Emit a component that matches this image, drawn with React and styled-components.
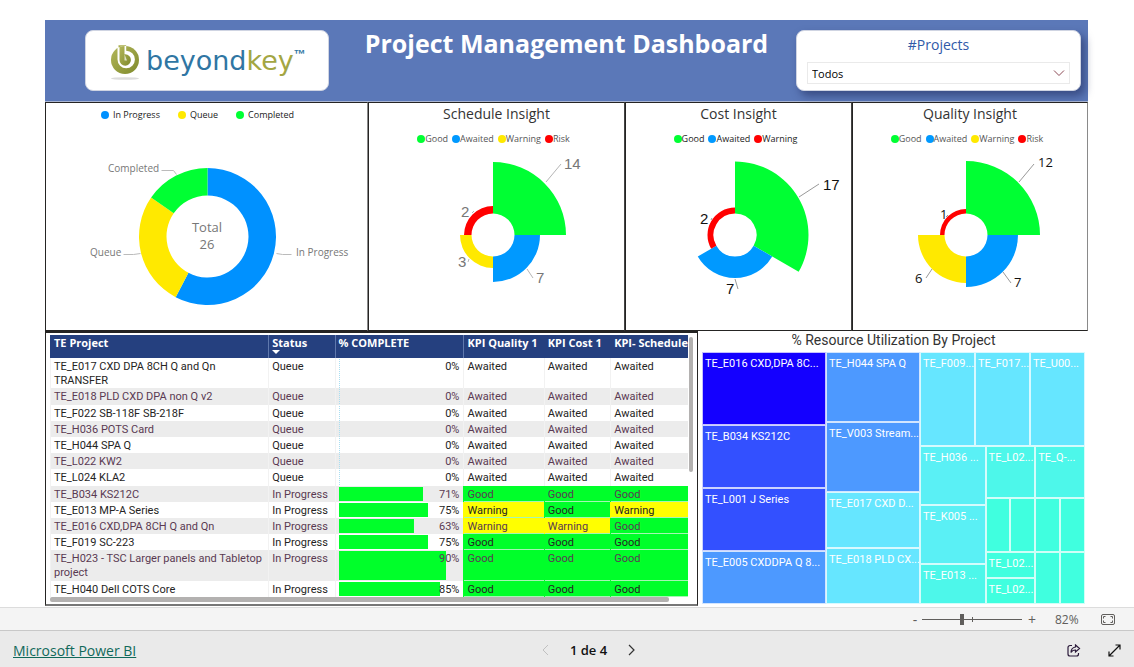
import React, { useState } from "react";
import styled, { createGlobalStyle } from "styled-components";

const GREEN = "#00ff33";
const BLUE = "#0091ff";
const SKY = "#0099ff";
const YELLOW = "#ffe900";
const RED = "#ff0000";
const UI = '"Open Sans", "Noto Sans", sans-serif';
const COMPACT = "Roboto, sans-serif";

const GlobalStyle = createGlobalStyle`
  * { box-sizing: border-box; }
  body { margin: 0; background: #fff; font-family: ${UI}; color: #252423; }
  button, select, input { font-family: inherit; }
`;

const Page = styled.div`
  display: flex;
  flex-direction: column;
  min-height: 100vh;
`;

const Report = styled.main`
  flex: 1;
  padding: 20px 46px 0 45px;
`;

/* ---------- header ---------- */

const Header = styled.header`
  display: flex;
  align-items: flex-start;
  height: 82px;
  padding: 10px 7px 10px 40px;
  background: #5b78b8;
  border-bottom: 1px solid #a9b5d2;
`;

const LogoCard = styled.div`
  display: flex;
  align-items: center;
  width: 244px;
  height: 61px;
  padding-left: 24px;
  gap: 6px;
  background: #fff;
  border: 1px solid #cfd4e2;
  border-radius: 8px;
`;

const Wordmark = styled.span`
  display: flex;
  align-items: flex-start;
  font-family: "DejaVu Sans", sans-serif;
  font-size: 27px;
  line-height: 30px;
  color: #2f76a3;
`;

const KeyPart = styled.span`
  color: #a3a643;
`;

const Trademark = styled.span`
  font-family: "Liberation Sans", sans-serif;
  font-size: 12px;
  font-weight: 700;
  line-height: 16px;
`;

const Title = styled.h1`
  flex: 1;
  margin: 0;
  padding-left: 8px;
  text-align: center;
  color: #fff;
  font-size: 25px;
  font-weight: 700;
  line-height: 26px;
  white-space: nowrap;
`;

const SlicerCard = styled.div`
  display: flex;
  flex-direction: column;
  width: 285px;
  height: 61px;
  padding: 2px 10px;
  gap: 6px;
  background: #fff;
  border: 1px solid #cfd4e2;
  border-radius: 8px;
  box-shadow: 4px 5px 8px rgba(30, 40, 90, 0.55);
`;

const SlicerLabel = styled.label`
  text-align: center;
  color: #2f5aa8;
  font-size: 14px;
  line-height: 23px;
`;

const SelectBox = styled.div`
  display: grid;
  align-items: center;
  border: 1px solid #eaeaea;
  > * { grid-area: 1 / 1; }
  > svg { justify-self: end; margin-right: 4px; pointer-events: none; }
`;

const Select = styled.select`
  appearance: none;
  width: 100%;
  height: 20px;
  padding: 0 4px;
  border: 0;
  background: transparent;
  color: #000;
  font-size: 11px;
`;

/* ---------- chart panels ---------- */

const ChartRow = styled.section`
  display: grid;
  grid-template-columns: 323fr 257fr 227fr 236fr;
`;

const Panel = styled.article`
  display: flex;
  flex-direction: column;
  align-items: center;
  min-width: 0;
  height: 229px;
  overflow: hidden;
  border: 1px solid #252423;
  border-right-color: ${(p) => (p.$softEdge ? "#8a8a8a" : "#444")};
`;

const PanelTitle = styled.h2`
  margin: 0;
  font-size: 14px;
  font-weight: 400;
  line-height: 22px;
  color: #333;
`;

const Legend = styled.ul`
  display: flex;
  margin: 0;
  padding: ${(p) => (p.$wide ? "0 18px 0 0" : "2px 6px 0 0")};
  gap: ${(p) => (p.$wide ? 18 : 4)}px;
  height: ${(p) => (p.$wide ? 24 : 26)}px;
  align-items: center;
  list-style: none;
  font-size: 9px;
  line-height: 12px;
  color: ${(p) => p.$color || "#555"};
`;

const LegendItem = styled.li`
  display: flex;
  align-items: center;
  gap: ${(p) => (p.$wide ? 4 : 0)}px;
  white-space: nowrap;
  &::before {
    content: "";
    width: 8px;
    height: 8px;
    border-radius: 50%;
    background: ${(p) => p.$dot};
  }
`;

const Drawing = styled.svg`
  display: block;
  flex: none;
  max-width: 100%;
`;

const point = (cx, cy, r, deg) => {
  const a = ((deg - 90) * Math.PI) / 180;
  return `${(cx + r * Math.cos(a)).toFixed(2)} ${(cy + r * Math.sin(a)).toFixed(2)}`;
};

function Sector({ cx, cy, inner, outer, from, to, fill }) {
  const big = to - from > 180 ? 1 : 0;
  return (
    <path
      fill={fill}
      d={`M${point(cx, cy, outer, from)} A${outer} ${outer} 0 ${big} 1 ${point(cx, cy, outer, to)} L${point(cx, cy, inner, to)} A${inner} ${inner} 0 ${big} 0 ${point(cx, cy, inner, from)} Z`}
    />
  );
}

function StatusDonut() {
  const c = { cx: 161.5, cy: 109.5, inner: 41, outer: 68.5 };
  return (
    <Drawing width="321" height="202" viewBox="0 0 321 202" role="img" aria-label="Projects by status">
      <Sector {...c} from={0} to={207.7} fill={BLUE} />
      <Sector {...c} from={207.7} to={304.6} fill={YELLOW} />
      <Sector {...c} from={304.6} to={360} fill={GREEN} />
      <g fill="none" stroke="#bbb">
        <path d="M115.500 43.500h12l3 4" />
        <path d="M77.500 127.500h10l7-1" />
        <path d="M230.500 126.500l6 1h9" />
      </g>
      <g fontFamily={UI} fontSize="10" fill="#777">
        <text x="62" y="45">Completed</text>
        <text x="44" y="129">Queue</text>
        <text x="250" y="129">In Progress</text>
      </g>
      <g fontFamily={UI} fontSize="13" fill="#777" textAnchor="middle">
        <text x="161" y="105">Total</text>
        <text x="161" y="122">26</text>
      </g>
    </Drawing>
  );
}

function RadialChart({ name, slices, leaders, labels, leaderColor, color, font, size }) {
  const step = 360 / slices.length;
  return (
    <Drawing width="220" height="179" viewBox="0 0 220 179" role="img" aria-label={name}>
      {slices.map((s, i) => (
        <Sector key={i} cx={106} cy={84} inner={21.5} outer={s.r} from={i * step} to={(i + 1) * step} fill={s.fill} />
      ))}
      <path d={leaders} fill="none" stroke={leaderColor} />
      <g fontFamily={font} fontSize={size} fill={color}>
        {labels.map(([x, y, t], i) => (
          <text key={i} x={x} y={y}>{t}</text>
        ))}
      </g>
    </Drawing>
  );
}

const ARIAL = '"Liberation Sans", sans-serif';

const insights = [
  {
    name: "Schedule Insight",
    legend: [["Good", GREEN], ["Awaited", SKY], ["Warning", YELLOW], ["Risk", RED]],
    legendColor: "#555",
    slices: [{ r: 73, fill: GREEN }, { r: 47, fill: SKY }, { r: 33, fill: YELLOW }, { r: 29, fill: RED }],
    leaders: "M159 31L174 13M140 118L146 127M82 108L81 111M85 62L87 60",
    labels: [[177, 18, "14"], [149, 132, "7"], [71, 116, "3"], [74, 66, "2"]],
    leaderColor: "#b5b5b5",
    color: "#777",
    font: ARIAL,
    size: 15,
  },
  {
    name: "Cost Insight",
    legend: [["Good", GREEN], ["Awaited", SKY], ["Warning", RED]],
    legendColor: "#222",
    slices: [{ r: 73.5, fill: GREEN }, { r: 43, fill: SKY }, { r: 27.5, fill: RED }],
    leaders: "M170 46L190 33M106 128L109 138M82 69L83 67",
    labels: [[194, 39, "17"], [97, 143, "7"], [71, 73, "2"]],
    leaderColor: "#999",
    color: "#111",
    font: ARIAL,
    size: 15,
  },
  {
    name: "Quality Insight",
    legend: [["Good", GREEN], ["Awaited", SKY], ["Warning", YELLOW], ["Risk", RED]],
    legendColor: "#555",
    slices: [{ r: 74, fill: GREEN }, { r: 52, fill: SKY }, { r: 48, fill: YELLOW }, { r: 26, fill: RED }],
    leaders: "M159 31L174 13M143 121L151 132M72 118L66 127M86 66L88 64",
    labels: [[178, 16, "12"], [154, 136, "7"], [55, 132, "6"], [80, 68, "1"]],
    leaderColor: "#999",
    color: "#111",
    font: UI,
    size: 13,
  },
];

/* ---------- table ---------- */

const BottomRow = styled.section`
  display: grid;
  grid-template-columns: minmax(0, 653fr) minmax(0, 390fr);
`;

const TablePanel = styled.article`
  display: grid;
  grid-template-columns: minmax(0, 1fr) 4px;
  grid-template-rows: auto 5px;
  column-gap: 1px;
  padding: 2px 4px 2px 4px;
  border: 1px solid #252423;
  border-top-width: 2px;
  border-bottom: 2px solid #777;
`;

const TableClip = styled.div`
  overflow: hidden;
`;

const Table = styled.table`
  width: 100%;
  height: 262px;
  table-layout: fixed;
  border-collapse: separate;
  border-spacing: 0;
  font-size: 11px;
  line-height: 14px;
`;

const Th = styled.th`
  width: ${(p) => p.$w};
  height: 23px;
  padding: 1px 0 0 3px;
  background: #25407f;
  border-left: 1px solid ${(p) => (p.$divided ? "#5f78ad" : "#25407f")};
  color: #fff;
  font-weight: 700;
  line-height: 14px;
  text-align: left;
  vertical-align: top;
  white-space: nowrap;
`;

const SortArrow = styled.span`
  display: block;
  width: 0;
  border: 4px solid transparent;
  border-top-color: #fff;
  border-bottom: 0;
`;

const Tr = styled.tr`
  background: ${(p) => (p.$band ? "#ececec" : "#fff")};
  color: ${(p) => (p.$band ? "#5a3a52" : "#252423")};
`;

const Td = styled.td`
  padding: ${(p) => (p.$kpi ? "2px 0 0 3px" : "2px 0 0 3px")};
  border-left: 1px solid ${(p) => (p.$kpi ? "transparent" : "#f2f2f2")};
  background: ${(p) => p.$kpi || "transparent"};
  box-shadow: ${(p) => (p.$kpi ? "inset 0 -1px #a6f5b4" : "none")};
  vertical-align: top;
  font-family: ${COMPACT};
  white-space: ${(p) => (p.$nowrap ? "nowrap" : "normal")};
`;

const BarTd = styled(Td)`
  padding-right: 4px;
  text-align: right;
  background-image: ${(p) =>
    p.$bar
      ? "linear-gradient(#00ff2a, #00ff2a)"
      : "repeating-linear-gradient(#a8def2 0 1px, transparent 1px 2px)"};
  background-repeat: no-repeat;
  background-position: 3px 1px;
`;

const VThumb = styled.div`
  height: 135px;
  margin-top: 2px;
  border-radius: 2px;
  background: #b3b1b0;
`;

const HThumb = styled.div`
  width: 97%;
  height: 5px;
  border-radius: 2px;
  background: #b3b1b0;
`;

const rows = [
  ["TE_E017 CXD DPA 8CH Q and Qn TRANSFER", "Queue", 0, "A", "A", "A"],
  ["TE_E018 PLD CXD DPA non Q v2", "Queue", 0, "A", "A", "A"],
  ["TE_F022 SB-118F SB-218F", "Queue", 0, "A", "A", "A"],
  ["TE_H036 POTS Card", "Queue", 0, "A", "A", "A"],
  ["TE_H044 SPA Q", "Queue", 0, "A", "A", "A"],
  ["TE_L022 KW2", "Queue", 0, "A", "A", "A"],
  ["TE_L024 KLA2", "Queue", 0, "A", "A", "A"],
  ["TE_B034 KS212C", "In Progress", 71, "G", "G", "G"],
  ["TE_E013 MP-A Series", "In Progress", 75, "W", "G", "W"],
  ["TE_E016 CXD,DPA 8CH Q and Qn", "In Progress", 63, "W", "W", "G"],
  ["TE_F019 SC-223", "In Progress", 75, "G", "G", "G"],
  ["TE_H023 - TSC Larger panels and Tabletop project", "In Progress", 90, "G", "G", "G"],
  ["TE_H040 Dell COTS Core", "In Progress", 85, "G", "G", "G"],
];

const kpi = {
  A: { text: "Awaited", color: undefined },
  G: { text: "Good", color: "#00ff2a" },
  W: { text: "Warning", color: "#ffff00" },
};

function ProjectTable() {
  return (
    <TablePanel>
      <TableClip>
        <Table>
          <thead>
            <tr>
              <Th $w="34.2%">TE Project</Th>
              <Th $w="10.4%" $divided>Status<SortArrow /></Th>
              <Th $w="20.2%" $divided>% COMPLETE</Th>
              <Th $w="12.6%" $divided>KPI Quality 1</Th>
              <Th $w="10.4%">KPI Cost 1</Th>
              <Th $w="12.2%">KPI- Schedule</Th>
            </tr>
          </thead>
          <tbody>
            {rows.map(([name, status, pct, ...kpis], i) => (
              <Tr key={name} $band={i % 2 === 1}>
                <Td>{name}</Td>
                <Td $nowrap>{status}</Td>
                <BarTd
                  $bar={pct > 0}
                  style={{
                    backgroundSize: pct
                      ? `calc((100% - 8px) * ${pct / 100}) calc(100% - 2px)`
                      : "1px 100%",
                  }}
                >
                  {pct}%
                </BarTd>
                {kpis.map((k, j) => (
                  <Td key={j} $kpi={kpi[k].color}>{kpi[k].text}</Td>
                ))}
              </Tr>
            ))}
          </tbody>
        </Table>
      </TableClip>
      <VThumb />
      <HThumb />
    </TablePanel>
  );
}

/* ---------- treemap ---------- */

const TreePanel = styled.article`
  display: flex;
  flex-direction: column;
  padding: 0 3px 2px 4px;
`;

const TreeTitle = styled.h2`
  margin: 0;
  padding-bottom: 3px;
  text-align: center;
  font-family: Roboto, sans-serif;
  font-size: 14px;
  font-weight: 400;
  line-height: 18px;
  color: #333;
`;

const Split = styled.div`
  display: grid;
  flex: 1;
  min-width: 0;
  min-height: 0;
  ${(p) => (p.$dir === "row" ? "grid-template-columns" : "grid-template-rows")}:
    ${(p) => p.$sizes.map((s) => `minmax(0, ${s}fr)`).join(" ")};
`;

const Tile = styled.div`
  min-width: 0;
  min-height: 0;
  padding: ${(p) => (p.$labelled ? "3px 0 0 2px" : "0")};
  overflow: hidden;
  background: ${(p) => p.$color};
  border: 1px solid rgba(255, 255, 255, 0.75);
  color: #fff;
  font-family: ${COMPACT};
  font-size: 11px;
  line-height: 15px;
  white-space: nowrap;
`;

const C = ["#1400ff", "#3350ff", "#4d99ff", "#66e6ff", "#5af0f5", "#4df7ea", "#40ffdf"];
const t = (size, color, label) => ({ size, color: C[color], label });

const tree = {
  dir: "row",
  size: 1,
  parts: [
    { dir: "column", size: 124, parts: [t(73, 0, "TE_E016 CXD,DPA 8C..."), t(63, 1, "TE_B034 KS212C"), t(63, 1, "TE_L001 J Series"), t(53, 2, "TE_E005 CXDDPA Q 8...")] },
    { dir: "column", size: 94, parts: [t(70, 2, "TE_H044 SPA Q"), t(70, 2, "TE_V003 Stream..."), t(56, 3, "TE_E017 CXD D..."), t(56, 3, "TE_E018 PLD CX...")] },
    {
      dir: "column",
      size: 165,
      parts: [
        { dir: "row", size: 94, parts: [t(1, 3, "TE_F009..."), t(1, 3, "TE_F017..."), t(1, 3, "TE_U00...")] },
        {
          dir: "row",
          size: 158,
          parts: [
            { dir: "column", size: 66, parts: [t(59, 4, "TE_H036 ..."), t(59, 4, "TE_K005 ..."), t(40, 5, "TE_E013 ...")] },
            {
              dir: "column",
              size: 50,
              parts: [
                t(52, 5, "TE_L02..."),
                { dir: "row", size: 53, parts: [t(1, 6), t(1, 6)] },
                t(26, 6, "TE_L02..."),
                t(26, 6, "TE_L02..."),
              ],
            },
            {
              dir: "column",
              size: 50,
              parts: [
                t(52, 5, "TE_Q-..."),
                { dir: "row", size: 53, parts: [t(1, 6), t(1, 6)] },
                { dir: "row", size: 52, parts: [t(1, 6), t(1, 6)] },
              ],
            },
          ],
        },
      ],
    },
  ],
};

function TreeNode({ node }) {
  if (!node.parts) {
    return <Tile $color={node.color} $labelled={!!node.label}>{node.label}</Tile>;
  }
  return (
    <Split $dir={node.dir} $sizes={node.parts.map((n) => n.size)}>
      {node.parts.map((n, i) => <TreeNode key={i} node={n} />)}
    </Split>
  );
}

/* ---------- status bar and footer ---------- */

const ZoomBar = styled.div`
  display: flex;
  align-items: center;
  justify-content: flex-end;
  height: 23px;
  padding-right: 18px;
  background: #f4f4f4;
  border-top: 1px solid #dcdcdc;
  color: #605e5c;
  font-size: 12px;
`;

const PlainButton = styled.button`
  display: flex;
  align-items: center;
  justify-content: center;
  width: ${(p) => p.$w || 20}px;
  height: 20px;
  padding: 0;
  border: 0;
  background: none;
  color: inherit;
  font-size: 14px;
`;

const Slider = styled.input`
  appearance: none;
  width: 100px;
  height: 11px;
  margin: 0;
  background:
    linear-gradient(#605e5c, #605e5c) 50px 3px / 1px 5px no-repeat,
    linear-gradient(#605e5c, #605e5c) 0 5px / 100% 1px no-repeat;
  &::-webkit-slider-thumb {
    appearance: none;
    width: 4px;
    height: 11px;
    background: #605e5c;
  }
`;

const Percent = styled.span`
  width: 58px;
  padding-left: 13px;
`;

const Footer = styled.footer`
  display: grid;
  grid-template-columns: 1fr auto 1fr;
  align-items: center;
  height: 37px;
  padding: 2px 10px 0 13px;
  background: #eaeaea;
  border-top: 1px solid #c8c8c8;
`;

const BrandLink = styled.a`
  color: #11695a;
  font-size: 14px;
  line-height: 20px;
`;

const Pager = styled.nav`
  display: flex;
  align-items: center;
  gap: 14px;
  padding-left: 40px;
  font-size: 13px;
  font-weight: 600;
  color: #111;
`;

const Actions = styled.div`
  display: flex;
  justify-content: flex-end;
  gap: 20px;
`;

function LogoMark() {
  return (
    <svg width="30" height="38" viewBox="0 0 30 38" aria-hidden="true">
      <defs>
        <linearGradient id="leaf" x1="0" y1="0" x2="1" y2="1">
          <stop offset="0" stopColor="#b3b75a" />
          <stop offset="1" stopColor="#7f8a2c" />
        </linearGradient>
      </defs>
      <ellipse cx="15" cy="36.500" rx="14" ry="1.300" fill="#dcdcdc" />
      <circle cx="15" cy="18" r="14" fill="url(#leaf)" />
      <path d="M7.500 2v15.500a8.700 8.700 0 1 0 8.700-8.700V2z" fill="#fff" />
      <path d="M9.500 5C11.200 4.300 12.800 4 14.500 4v8.300h.8a5.700 5.700 0 1 1-5.800 5.700z" fill="url(#leaf)" />
      <path d="M14.500 12.300v6.200h2.500z" fill="#fff" opacity=".7" />
      <path d="M8.500 5.600C11 4.300 13.500 3.900 16.200 4V3.200H8.500z" fill="#a9ae4e" />
    </svg>
  );
}

export default function App() {
  const [zoom, setZoom] = useState(40);
  return (
    <Page>
      <GlobalStyle />
      <Report>
        <Header>
          <LogoCard>
            <LogoMark />
            <Wordmark>
              <span>beyond<KeyPart>key</KeyPart></span>
              <Trademark>™</Trademark>
            </Wordmark>
          </LogoCard>
          <Title>Project Management Dashboard</Title>
          <SlicerCard>
            <SlicerLabel htmlFor="projects">#Projects</SlicerLabel>
            <SelectBox>
              <Select id="projects" defaultValue="Todos">
                <option>Todos</option>
              </Select>
              <svg width="12" height="8" viewBox="0 0 12 8" fill="none" stroke="#8c4a55">
                <path d="M1 1.500l5 5 5-5" />
              </svg>
            </SelectBox>
          </SlicerCard>
        </Header>

        <ChartRow>
          <Panel $softEdge>
            <Legend $wide $color="#222">
              <LegendItem $wide $dot={BLUE}>In Progress</LegendItem>
              <LegendItem $wide $dot={YELLOW}>Queue</LegendItem>
              <LegendItem $wide $dot={GREEN}>Completed</LegendItem>
            </Legend>
            <StatusDonut />
          </Panel>
          {insights.map(({ legend, legendColor, ...chart }) => (
            <Panel key={chart.name} $softEdge={chart.name === "Quality Insight"}>
              <PanelTitle>{chart.name}</PanelTitle>
              <Legend $color={legendColor}>
                {legend.map(([label, dot]) => (
                  <LegendItem key={label} $dot={dot}>{label}</LegendItem>
                ))}
              </Legend>
              <RadialChart {...chart} />
            </Panel>
          ))}
        </ChartRow>

        <BottomRow>
          <ProjectTable />
          <TreePanel>
            <TreeTitle>% Resource Utilization By Project</TreeTitle>
            <TreeNode node={tree} />
          </TreePanel>
        </BottomRow>
      </Report>

      <ZoomBar>
        <PlainButton $w={14} aria-label="Zoom out">-</PlainButton>
        <Slider type="range" aria-label="Zoom" value={zoom} onChange={(e) => setZoom(e.target.value)} />
        <PlainButton aria-label="Zoom in">+</PlainButton>
        <Percent>82%</Percent>
        <PlainButton $w={16} aria-label="Fit to page">
          <svg width="14" height="11" viewBox="0 0 14 11" fill="none" stroke="#605e5c">
            <rect x=".5" y=".5" width="13" height="10" rx="1.500" />
            <path d="M2.500 4.500v-2h2M9.500 2.500h2v2M11.500 6.500v2h-2M4.500 8.500h-2v-2" />
          </svg>
        </PlainButton>
      </ZoomBar>

      <Footer>
        <div><BrandLink href="#powerbi">Microsoft Power BI</BrandLink></div>
        <Pager aria-label="Pages">
          <PlainButton aria-label="Previous page" disabled>
            <svg width="7" height="12" viewBox="0 0 7 12" fill="none" stroke="#c0c0c0"><path d="M6 1L1 6l5 5" /></svg>
          </PlainButton>
          <span>1 de 4</span>
          <PlainButton aria-label="Next page">
            <svg width="7" height="12" viewBox="0 0 7 12" fill="none" stroke="#333" strokeWidth="1.200"><path d="M1 1l5 5-5 5" /></svg>
          </PlainButton>
        </Pager>
        <Actions>
          <PlainButton aria-label="Share">
            <svg width="14" height="13" viewBox="0 0 14 13" fill="none" stroke="#2b1a3a" strokeWidth="1.200">
              <path d="M5 1.500H3a2 2 0 0 0-2 2v6.500a2 2 0 0 0 2 2h6.500a2 2 0 0 0 2-2V9" />
              <path d="M8.500 1l4 3.500-4 3.500V6C6.500 6 5 6.500 4 8.500 4 5.500 5.500 3.500 8.500 3z" />
            </svg>
          </PlainButton>
          <PlainButton aria-label="Full screen">
            <svg width="13" height="13" viewBox="0 0 13 13" fill="none" stroke="#111" strokeWidth="1.200">
              <path d="M1 12L12 1M7.500 1H12v4.500M1 7.500V12h4.500" />
            </svg>
          </PlainButton>
        </Actions>
      </Footer>
    </Page>
  );
}
